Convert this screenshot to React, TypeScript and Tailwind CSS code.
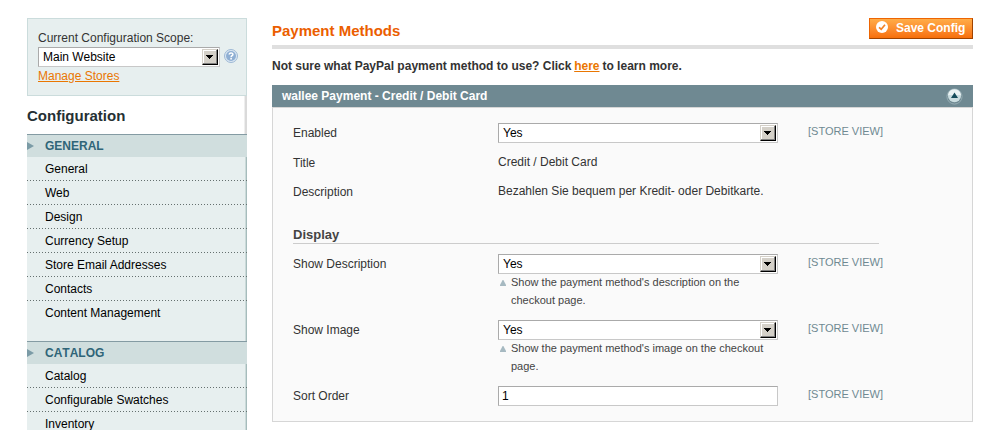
import React from "react";

function Select({ value, className }: { value: string; className: string }) {
  return (
    <div className={`flex h-5 items-center justify-between border border-[#c8c8c8] border-t-[#aaa] border-l-[#aaa] bg-white pr-px pl-1 text-[12px] leading-[18px] text-black ${className}`}>
      <span>{value}</span>
      <span className="flex size-4 items-center border border-t-[#d4d0c8] border-r-black border-b-black border-l-[#d4d0c8] bg-[#d4d0c8] pl-[3px] shadow-[inset_-1px_-1px_0_#808080,inset_1px_1px_0_#fff]">
        <svg width="7" height="4" viewBox="0 0 7 4" shapeRendering="crispEdges">
          <path d="M0 0h7v1H0zM1 1h5v1H1zM2 2h3v1H2zM3 3h1v1H3z" fill="#000" />
        </svg>
      </span>
    </div>
  );
}

function HelpIcon() {
  return (
    <svg width="14" height="14" viewBox="0 0 14 14">
      <circle cx="7" cy="7" r="6.5" fill="#dce8f3" stroke="#9db8d4" />
      <circle cx="7" cy="7" r="5" fill="#8fafd3" />
      <path d="M5.2 5.6C5.2 3.3 8.9 3.4 8.9 5.4C8.9 6.7 7.1 6.7 7.1 8.2" fill="none" stroke="#fff" strokeWidth="1.5" />
      <rect x="6.3" y="9" width="1.6" height="1.5" fill="#fff" />
    </svg>
  );
}

function Group({ title, items, last }: { title: string; items: string[]; last?: string }) {
  return (
    <div>
      <div className="flex h-[23px] items-center border-t border-[#849ba3] bg-[#d0dede] text-[12px] font-bold text-[#2f6578] [font-kerning:none]">
        <svg width="7" height="8" viewBox="0 0 7 8" className="mr-[11px]">
          <path d="M0 0L7 4L0 8Z" fill="#7b9ba6" />
        </svg>
        {title}
      </div>
      <ul className="border-r border-[#a6bcbc] bg-[#e7efef] pb-4 shadow-[inset_-1px_0_0_#cbdad9]">
        {items.map((item) => (
          <li key={item} className="-mr-px flex h-6 flex-col text-[12px] text-black">
            <span className="h-[23px] pl-[18px] leading-6">{item}</span>
            {item !== last && (
              <span className="h-px bg-[repeating-linear-gradient(90deg,#65706f_0px,#65706f_1px,transparent_1px,transparent_3px)]" />
            )}
          </li>
        ))}
      </ul>
    </div>
  );
}

function Scope() {
  return <span className="pl-[30px] text-[11px] leading-4 text-[#6f8992]">[STORE VIEW]</span>;
}

function Note({ children }: { children: React.ReactNode }) {
  return (
    <div className="-mt-px flex w-[280px] pl-[2px] text-[11px] leading-[18px] text-[#444]">
      <svg width="6" height="6" viewBox="0 0 6 6" className="mt-[7px] mr-[5px] shrink-0">
        <path d="M2.6 0H3.4L6 5V6H0V5Z" fill="#a6b9c1" />
      </svg>
      <span>{children}</span>
    </div>
  );
}

export default function App() {
  return (
    <div className="flex h-[430px] w-[1000px] overflow-hidden bg-white pt-[18px] pl-[27px] font-['Liberation_Sans',Arial,sans-serif] text-[12px] text-[#333]">
      <aside className="w-[220px] shrink-0">
        <div className="h-[78px] border border-[#cbdcdc] bg-[#e7efef] pt-[11px] pl-[10px]">
          <div className="h-[17px] leading-4">Current Configuration Scope:</div>
          <div className="flex items-center gap-1">
            <Select value="Main Website" className="w-[182px]" />
            <div className="-mt-[3px]"><HelpIcon /></div>
          </div>
          <a className="block leading-[18px] text-[#ea7601] underline">Manage Stores</a>
        </div>
        <h3 className="h-[38px] border-r-2 border-[#dadada] text-[15px] leading-10 font-bold text-[#253033] shadow-[inset_-1px_0_0_#eee]">Configuration</h3>
        <Group
          title="GENERAL"
          items={["General", "Web", "Design", "Currency Setup", "Store Email Addresses", "Contacts", "Content Management"]}
          last="Content Management"
        />
        <Group title="CATALOG" items={["Catalog", "Configurable Swatches", "Inventory"]} />
      </aside>

      <main className="ml-[25px] w-[701px] shrink-0">
        <div className="flex h-[31px] items-start justify-between border-b-4 border-[#dfdfdf]">
          <h1 className="text-[15px] leading-[26px] font-bold text-[#eb5e00]">Payment Methods</h1>
          <button className="flex h-[21px] w-[104px] items-center border border-[#ed6502] border-r-[#a04300] border-b-[#a04300] bg-linear-to-b from-[#ffac47] to-[#f76f08] pl-1.5 text-[12px] font-bold text-white">
            <svg width="12" height="12" viewBox="0 0 12 12" className="mr-2 mb-[3px]">
              <circle cx="6" cy="6" r="6" fill="#fff" />
              <path d="M3 6.3L5.2 8.2L9 3.8" fill="none" stroke="#f28326" strokeWidth="1.7" />
            </svg>
            <span className="pb-0.5">Save Config</span>
          </button>
        </div>
        <p className="h-9 leading-[34px] font-bold">
          Not sure what PayPal payment method to use? Click{" "}
          <a className="-mr-[0.4px] -ml-[0.6px] text-[#ea7601] underline">here</a> to learn more.
        </p>
        <div className="flex h-[22px] items-center justify-between bg-[#6f8992] pr-[10px] pl-[10px] font-bold text-white">
          <span>wallee Payment - Credit / Debit Card</span>
          <svg width="17" height="17" viewBox="0 0 17 17" className="mt-px">
            <circle cx="8.5" cy="8.5" r="7.6" fill="none" stroke="#94abb2" strokeWidth="1" />
            <circle cx="8.5" cy="7.6" r="6.6" fill="#cbdde0" />
            <path d="M2 7a6.6 6.6 0 0 1 13 0Z" fill="#eaf2f3" />
            <path d="M8.5 4.5L12 10H5Z" fill="#164c5b" />
          </svg>
        </div>
        <section className="h-[315px] border border-[#d6d6d6] bg-[#fafafa] pt-[15px] pl-5">
          <div className="flex h-[30px]">
            <span className="w-[205px] leading-5">Enabled</span>
            <Select value="Yes" className="w-[280px]" />
            <Scope />
          </div>
          <div className="flex h-[29px]">
            <span className="w-[205px] leading-5">Title</span>
            <span className="leading-[18px]">Credit / Debit Card</span>
          </div>
          <div className="flex h-[43px]">
            <span className="w-[205px] leading-5">Description</span>
            <span className="leading-[18px]">Bezahlen Sie bequem per Kredit- oder Debitkarte.</span>
          </div>
          <h2 className="mb-[10px] h-[19px] w-[586px] border-b border-[#ccc] text-[13px] leading-[19px] font-bold text-[#444]">Display</h2>
          <div className="flex h-[66px]">
            <span className="w-[205px] leading-5">Show Description</span>
            <div>
              <Select value="Yes" className="w-[280px]" />
              <Note>Show the payment method's description on the checkout page.</Note>
            </div>
            <Scope />
          </div>
          <div className="flex h-[66px]">
            <span className="w-[205px] leading-5">Show Image</span>
            <div>
              <Select value="Yes" className="w-[280px]" />
              <Note>Show the payment method's image on the checkout page.</Note>
            </div>
            <Scope />
          </div>
          <div className="flex">
            <span className="w-[205px] leading-5">Sort Order</span>
            <input
              defaultValue="1"
              className="h-5 w-[280px] border border-[#c8c8c8] border-t-[#aaa] border-l-[#aaa] bg-white pl-[3px] text-[12px] text-black"
            />
            <Scope />
          </div>
        </section>
      </main>
    </div>
  );
}
